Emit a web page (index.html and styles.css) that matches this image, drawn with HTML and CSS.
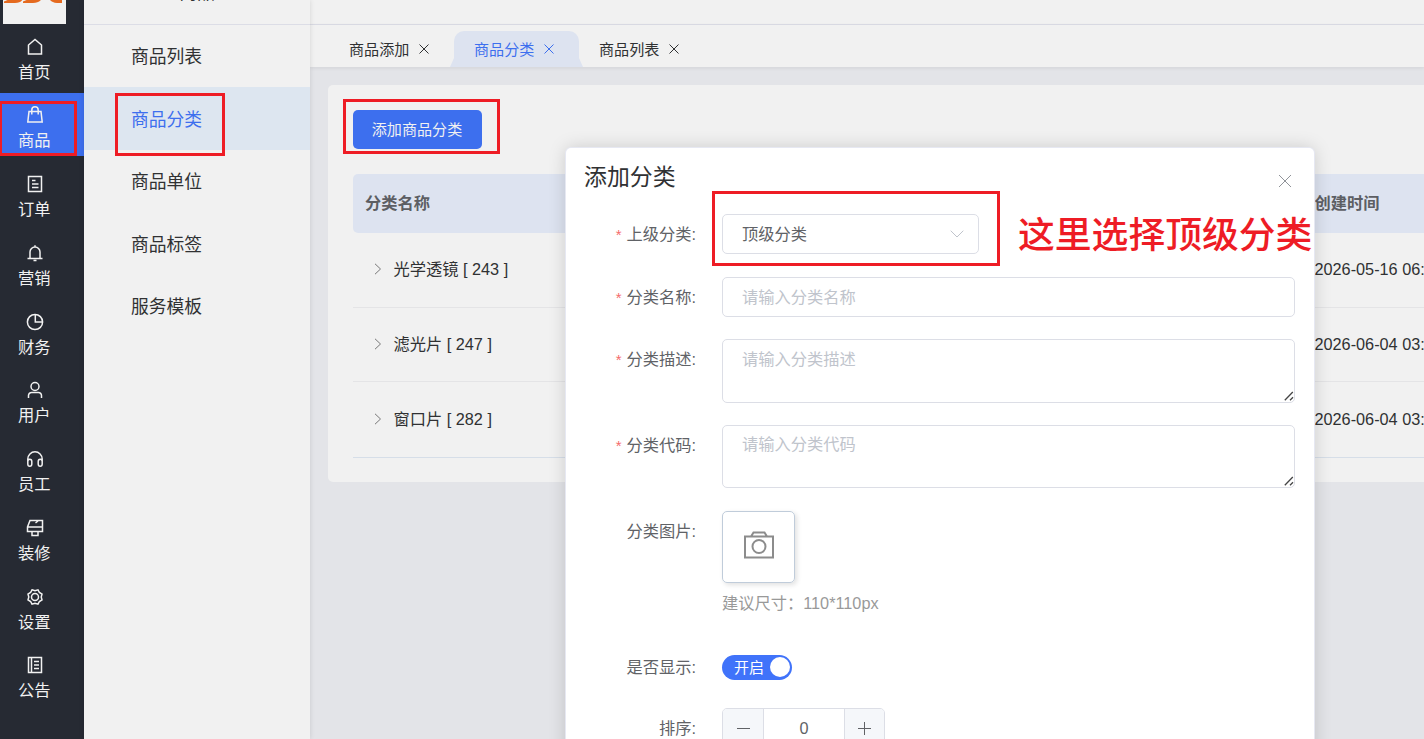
FILE: index.html
```
<!DOCTYPE html>
<html lang="zh-CN">
<head>
    <meta charset="UTF-8">
    <meta name="viewport" content="width=device-width, initial-scale=1.0">
    <title>商品分类</title>
    <link rel="stylesheet" href="styles.css">
</head>
<body>
    <div class="app">
        <aside class="sidebar">
            <div class="logo">
                <svg width="63" height="24" viewBox="0 0 63 24">
                    <path d="M1 1.500 7-1H20C18 2 16 3 12 3H1zM20 1.500 26-1H39C36 2 34 3 30 3H20zM46-1H59V3H54C50 3 48 1 46-1z" fill="#e56a1f"/>
                </svg>
            </div>
            <nav class="main-nav">
                <a class="nav-item">
                    <svg viewBox="0 0 18 18"><path d="M2.500 16V7L9 1.500 15.500 7v9z"/></svg>
                    <span>首页</span>
                </a>
                <a class="nav-item active">
                    <svg viewBox="0 0 18 18"><path d="M3 5.500h12l1.200 10.500H1.800zM5.800 8.500V4a3.200 3.200 0 0 1 6.400 0v4.500"/></svg>
                    <span>商品</span>
                </a>
                <a class="nav-item">
                    <svg viewBox="0 0 18 18"><path d="M2.500 1.500h13v15h-13zM6 5.500h3.500M6 9h6.500M6 12.500h6.500"/></svg>
                    <span>订单</span>
                </a>
                <a class="nav-item">
                    <svg viewBox="0 0 18 18"><path d="M1.500 14.500h15M4 14.500V8a5 5 0 0 1 10 0v6.500M9 3V1.200M7.500 16.500h3"/></svg>
                    <span>营销</span>
                </a>
                <a class="nav-item">
                    <svg viewBox="0 0 18 18"><circle cx="9" cy="9" r="7.600"/><path d="M9.300 1.500V9h7.300"/></svg>
                    <span>财务</span>
                </a>
                <a class="nav-item">
                    <svg viewBox="0 0 18 18"><circle cx="9" cy="5.500" r="4"/><path d="M2.500 17v-2.500a3 3 0 0 1 3-3h7a3 3 0 0 1 3 3V17"/></svg>
                    <span>用户</span>
                </a>
                <a class="nav-item">
                    <svg viewBox="0 0 18 18"><path d="M1.800 14V9a7.200 7.200 0 0 1 14.400 0v5M1.800 11.500c0-3 4-3 4 0v2.500c0 3-4 3-4 0zM12.200 11.500c0-3 4-3 4 0v2.500c0 3-4 3-4 0z"/></svg>
                    <span>员工</span>
                </a>
                <a class="nav-item">
                    <svg viewBox="0 0 18 18"><path d="M4 1.500h12.500v11h-15V8zM1.500 8h15M9.500 4 12 2M6 12.500v4h6v-4"/></svg>
                    <span>装修</span>
                </a>
                <a class="nav-item">
                    <svg viewBox="0 0 18 18"><path d="M6 1.800 9 2.700l3-.9 1.400 2.700 2.600 1.700L15.200 9l.8 2.800-2.600 1.700-1.400 2.700-3-.9-3 .9-1.400-2.700L2 11.800 2.800 9 2 6.200l2.600-1.700z"/><circle cx="9" cy="9" r="3.500"/></svg>
                    <span>设置</span>
                </a>
                <a class="nav-item">
                    <svg viewBox="0 0 18 18"><path d="M2.500 1.500h13v15h-13zM5.500 1.500v15M8 5.500h5M8 9h5M8 12.500h5"/></svg>
                    <span>公告</span>
                </a>
            </nav>
        </aside>

        <aside class="submenu">
            <div class="submenu-title"><span>商品</span></div>
            <a class="submenu-item">商品列表</a>
            <a class="submenu-item active">商品分类</a>
            <a class="submenu-item">商品单位</a>
            <a class="submenu-item">商品标签</a>
            <a class="submenu-item">服务模板</a>
        </aside>

        <main class="content">
            <div class="topbar"></div>
            <div class="tabs">
                <div class="tab">商品添加<svg class="tab-close" viewBox="0 0 10 10"><path d="M.5.5l9 9M9.500.5l-9 9"/></svg></div>
                <div class="tab active">商品分类<svg class="tab-close" viewBox="0 0 10 10"><path d="M.5.5l9 9M9.500.5l-9 9"/></svg></div>
                <div class="tab">商品列表<svg class="tab-close" viewBox="0 0 10 10"><path d="M.5.5l9 9M9.500.5l-9 9"/></svg></div>
            </div>
            <section class="card">
                <button class="btn-add">添加商品分类</button>
                <div class="table">
                    <div class="row head"><div>分类名称</div><div>创建时间</div></div>
                    <div class="row">
                        <div class="name"><svg class="arrow" viewBox="0 0 8 12"><path d="M1 .8 6.500 6 1 11.200"/></svg><span>光学透镜 [ 243 ]</span></div>
                        <div>2026-05-16 06:12</div>
                    </div>
                    <div class="row">
                        <div class="name"><svg class="arrow" viewBox="0 0 8 12"><path d="M1 .8 6.500 6 1 11.200"/></svg><span>滤光片 [ 247 ]</span></div>
                        <div>2026-06-04 03:15</div>
                    </div>
                    <div class="row">
                        <div class="name"><svg class="arrow" viewBox="0 0 8 12"><path d="M1 .8 6.500 6 1 11.200"/></svg><span>窗口片 [ 282 ]</span></div>
                        <div>2026-06-04 03:16</div>
                    </div>
                </div>
            </section>
        </main>
    </div>

    <div class="dialog">
        <div class="dialog-header">
            <h2>添加分类</h2>
            <svg class="dialog-close" viewBox="0 0 14 14"><path d="M1 1l12 12M13 1L1 13"/></svg>
        </div>
        <div class="form">
            <div class="form-item parent">
                <label class="required">上级分类:</label>
                <div class="select"><span>顶级分类</span><svg viewBox="0 0 14 8"><path d="M.7.7 7 7 13.300.7"/></svg></div>
            </div>
            <div class="form-item">
                <label class="required">分类名称:</label>
                <input type="text" placeholder="请输入分类名称">
            </div>
            <div class="form-item area">
                <label class="required">分类描述:</label>
                <div class="textarea">
                    <textarea placeholder="请输入分类描述"></textarea>
                    <svg class="resizer" viewBox="0 0 10 10"><path d="M.8 9.200 8.800 1M6 9.200 9 6.200"/></svg>
                </div>
            </div>
            <div class="form-item area code">
                <label class="required">分类代码:</label>
                <div class="textarea">
                    <textarea placeholder="请输入分类代码"></textarea>
                    <svg class="resizer" viewBox="0 0 10 10"><path d="M.8 9.200 8.800 1M6 9.200 9 6.200"/></svg>
                </div>
            </div>
            <div class="form-item image">
                <label>分类图片:</label>
                <div>
                    <div class="upload">
                        <svg viewBox="0 0 30 28"><path d="M1 5.500h28v21H1zM7 5.500l2.500-4h11l2.500 4"/><circle cx="15" cy="15.500" r="6.500"/></svg>
                    </div>
                    <p class="tip">建议尺寸：110*110px</p>
                </div>
            </div>
            <div class="form-item switch-row">
                <label>是否显示:</label>
                <div class="switch"><span>开启</span><i></i></div>
            </div>
            <div class="form-item">
                <label>排序:</label>
                <div class="number">
                    <button><svg viewBox="0 0 13 13"><path d="M0 6.500h13"/></svg></button>
                    <span>0</span>
                    <button><svg viewBox="0 0 13 13"><path d="M0 6.500h13M6.500 0v13"/></svg></button>
                </div>
            </div>
        </div>
    </div>

    <!-- 操作指引标注 -->
    <div class="mark mark-nav"></div>
    <div class="mark mark-submenu"></div>
    <div class="mark mark-add"></div>
    <div class="mark mark-select"></div>
    <div class="mark-text">这里选择顶级分类</div>
</body>
</html>
```
FILE: styles.css
```
* {
    margin: 0;
    padding: 0;
    box-sizing: border-box;
}

body {
    font-family: "Liberation Sans", "Noto Sans CJK SC", sans-serif;
    font-size: 16.25px;
    color: #303133;
    background: #e3e4e8;
    height: 739px;
    overflow: hidden;
    position: relative;
}

svg {
    display: block;
    fill: none;
    stroke: currentColor;
}

.app {
    display: flex;
    height: 739px;
}

/* 左侧主导航 */
.sidebar {
    width: 84px;
    flex-shrink: 0;
    background: #262a33;
    color: #f1f1f1;
}

.logo {
    width: 63px;
    height: 24px;
    margin-left: 3px;
    background: #f1f1f1;
    overflow: hidden;
}

.logo svg {
    stroke: none;
}

.nav-item {
    display: flex;
    flex-direction: column;
    align-items: center;
    height: 63px;
    margin-bottom: 5.75px;
    padding: 13.500px 15.500px 0 0;
    font-size: 16.25px;
    line-height: 24px;
}

.nav-item svg {
    width: 18px;
    height: 18px;
    margin: 0 -.5px 4px 0;
    stroke-width: 1.5;
}

.nav-item.active {
    background: #3d6fee;
}

/* 二级菜单 */
.submenu {
    width: 226px;
    flex-shrink: 0;
    background: #f1f1f1;
    box-shadow: 0 0 5px rgba(0, 0, 0, 0.12);
    position: relative;
}

.submenu-title {
    height: 25px;
    margin-bottom: -.6px;
    border-bottom: 1px solid #dcdde6;
    overflow: hidden;
}

.submenu-title span {
    display: block;
    margin: -19px 0 0 95px;
    font-size: 18px;
    line-height: 24px;
}

.submenu-item {
    display: block;
    height: 62.600px;
    padding: 1.500px 0 0 47px;
    font-size: 17.8px;
    line-height: 62px;
}

.submenu-item.active {
    background: #dde6f0;
    color: #3d6fee;
}

/* 内容区 */
.content {
    flex: 1;
    min-width: 0;
}

.topbar {
    height: 25px;
    background: #f1f1f1;
    border-bottom: 1px solid #dcdde6;
}

.tabs {
    display: flex;
    height: 42px;
    padding: 6px 0 0 19px;
    background: #f1f1f1;
    box-shadow: 0 1px 4px rgba(0, 0, 0, 0.08);
}

.tab {
    display: flex;
    align-items: center;
    width: 125px;
    height: 36px;
    padding: 0 0 3px 20px;
    font-size: 15.1px;
    position: relative;
}

.tab-close {
    width: 10px;
    height: 10px;
    margin: 2px 0 0 9.500px;
}

.tab.active {
    background: #dde3f0;
    color: #3d6fee;
    border-radius: 10px 10px 0 0;
}

.tab.active::before,
.tab.active::after {
    content: "";
    position: absolute;
    bottom: 0;
    border-bottom: 9px solid #dde3f0;
}

.tab.active::before {
    left: -4px;
    border-left: 4px solid transparent;
}

.tab.active::after {
    right: -4px;
    border-right: 4px solid transparent;
}

.card {
    height: 397px;
    margin: 18px 0 0 18px;
    padding: 25px 0 0 25px;
    background: #f1f1f1;
    border-radius: 5px 0 0 5px;
}

.btn-add {
    display: block;
    width: 129px;
    height: 39px;
    padding: 0 1px 4px 0;
    border: none;
    border-radius: 5px;
    background: #3d6fee;
    color: #f1f1f1;
    font-family: inherit;
    font-size: 15.1px;
}

.table {
    margin-top: 25px;
    border-bottom: 1px solid #d6dee8;
}

.row {
    display: grid;
    grid-template-columns: 961.500px 1fr;
    align-items: center;
    height: 74.500px;
    border-bottom: 1px solid #e4e4e6;
    white-space: nowrap;
}

.row:last-child {
    border-bottom: none;
}

.row.head {
    height: 59px;
    padding: 0 0 3px 12px;
    grid-template-columns: 949.500px 1fr;
    background: #dde3f0;
    border: none;
    border-radius: 5px 0 0 5px;
    font-weight: bold;
    color: #5c5e63;
}

.name {
    display: flex;
    align-items: center;
    padding-left: 21px;
}

.name span {
    margin-top: -3px;
}

.arrow {
    width: 8px;
    height: 12px;
    margin: -1px 11.500px 0 0;
    color: #777;
}

/* 弹窗 */
.dialog {
    position: absolute;
    left: 566px;
    top: 148px;
    width: 748px;
    height: 620px;
    background: #fff;
    border-radius: 5px;
    box-shadow: 0 0 0 1px #e6e8f2, 0 0 18px rgba(0, 0, 0, 0.17);
}

.dialog-header {
    display: flex;
    justify-content: space-between;
    height: 66px;
    padding: 13px 22px 0 18px;
}

.dialog-header h2 {
    font-size: 22.9px;
    font-weight: normal;
    line-height: 33px;
}

.dialog-close {
    width: 14px;
    height: 14px;
    margin-top: 13px;
    color: #909399;
}

.form-item {
    display: flex;
    height: 40px;
    margin-bottom: 22px;
    padding-right: 19px;
}

.form-item.parent {
    margin-bottom: 23px;
}

.form-item label {
    width: 156px;
    flex-shrink: 0;
    padding-right: 26px;
    color: #606266;
    line-height: 40px;
    white-space: nowrap;
    text-align: right;
}

.form-item label.required::before {
    content: "*";
    color: #f56c6c;
    margin-right: 5px;
    font-size: 15px;
}

.select,
input,
textarea {
    border: 1px solid #dcdee6;
    border-radius: 5px;
    background: #fff;
    color: #606266;
    font-family: inherit;
    font-size: 16.25px;
    outline: none;
}

.select {
    display: flex;
    align-items: center;
    justify-content: space-between;
    width: 257px;
    height: 40px;
    padding: 0 14px 0 19px;
}

.select span {
    margin-top: -2px;
}

.select svg {
    width: 14px;
    height: 8px;
    color: #c0c4cc;
}

input {
    width: 573px;
    height: 40px;
    padding: 0 19px;
}

.textarea {
    position: relative;
    width: 573px;
    height: 64px;
}

textarea {
    display: block;
    width: 100%;
    height: 100%;
    padding: 7px 19px;
    line-height: 24px;
    resize: none;
}

.code .textarea {
    height: 63px;
}

.code textarea {
    padding-top: 6px;
}

.resizer {
    position: absolute;
    right: 1px;
    bottom: 2px;
    width: 10px;
    height: 10px;
    color: #444;
    stroke-width: 1.3;
}

::placeholder {
    color: #c0c4cc;
}

.form-item.area {
    height: 64px;
}

.form-item.image {
    height: 116px;
    margin-bottom: 20px;
}

.upload {
    display: flex;
    align-items: center;
    justify-content: center;
    width: 73px;
    height: 72px;
    border: 1px solid #c0ccda;
    border-radius: 5px;
    box-shadow: 2px 2px 5px rgba(0, 0, 0, 0.12);
    color: #8c8c8c;
}

.upload svg {
    width: 30px;
    height: 28px;
    margin-top: -4px;
    stroke-width: 2;
}

.tip {
    margin-top: 8px;
    color: #999;
    line-height: 24px;
}

.switch-row {
    align-items: center;
    margin-bottom: 21px;
}

.switch {
    display: flex;
    align-items: center;
    justify-content: space-between;
    width: 70px;
    height: 25px;
    padding: 0 2px 0 12px;
    border-radius: 13px;
    background: #4073fa;
    color: #fff;
    font-size: 15px;
}

.switch span {
    margin-top: -2px;
}

.switch i {
    width: 20px;
    height: 20px;
    border-radius: 50%;
    background: #fff;
}

.number {
    display: flex;
    width: 163px;
    height: 40px;
    border: 1px solid #dcdee6;
    border-radius: 5px;
    overflow: hidden;
    color: #606266;
}

.number button {
    display: flex;
    align-items: center;
    justify-content: center;
    width: 40px;
    border: none;
    background: #f5f7fa;
    color: #606266;
}

.number button:last-child {
    width: 39px;
}

.number button svg {
    width: 13px;
    height: 13px;
}

.number span {
    flex: 1;
    border-left: 1px solid #dcdee6;
    border-right: 1px solid #dcdee6;
    line-height: 38px;
    text-align: center;
}

/* 标注 */
.mark {
    position: absolute;
    border: 3px solid #ee1c25;
}

.mark-nav {
    left: -1px;
    top: 101px;
    width: 78px;
    height: 55px;
}

.mark-submenu {
    left: 115px;
    top: 93px;
    width: 110px;
    height: 63px;
}

.mark-add {
    left: 343px;
    top: 99px;
    width: 157px;
    height: 55px;
}

.mark-select {
    left: 712px;
    top: 191px;
    width: 288px;
    height: 75px;
}

.mark-text {
    position: absolute;
    left: 1018px;
    top: 212px;
    color: #ee1c25;
    font-size: 36.8px;
    font-weight: 500;
    line-height: 48px;
    white-space: nowrap;
}
```
